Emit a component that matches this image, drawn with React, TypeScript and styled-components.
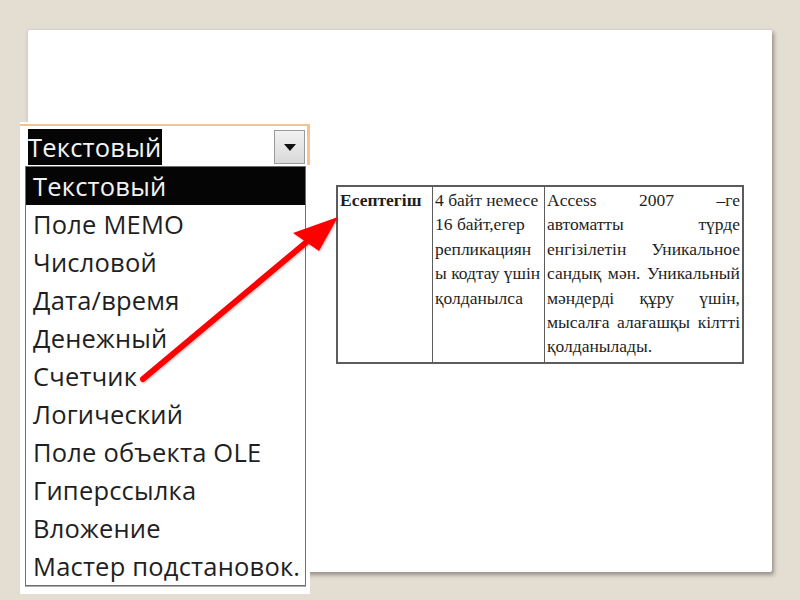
import React from "react"
import styled, { createGlobalStyle } from "styled-components"

const GlobalStyle = createGlobalStyle`
  html, body {
    margin: 0;
    padding: 0;
    background: #e4ddd2;
  }
`

const PageTag = styled.div`
  position: relative;
  width: 800px;
  height: 600px;
  padding: 29px 28px 0 27px;
  box-sizing: border-box;
  overflow: hidden;
`

const SlideTag = styled.div`
  height: 543px;
  background: #fff;
  border-radius: 2px;
  border-top: 1px solid #d6d1c8;
  border-left: 1px solid #d6d1c8;
  box-shadow: 2px 3px 4px rgba(0, 0, 0, 0.35);
  box-sizing: border-box;
  display: flex;
  align-items: flex-start;
  padding-top: 92px;
`

const DropdownTag = styled.div`
  width: 290px;
  margin-left: -8px;
  background: #fff;
  padding: 2px 0 8px;
  display: flex;
  flex-direction: column;
  font-family: "Open Sans", "Noto Sans", sans-serif;
  font-size: 25.5px;
  letter-spacing: 0.2px;
`

const ComboTag = styled.div`
  display: flex;
  align-items: center;
  justify-content: space-between;
  height: 41px;
  border-top: 2px solid #f3c48e;
  border-right: 3px solid #f3c48e;
  box-sizing: border-box;
  padding: 3px 2px 0 8px;
`

const ComboValue = styled.span`
  background: #050505;
  color: #f4f4f4;
  line-height: 36px;
  height: 36px;
  padding: 0 1px 0 0;
`

const ArrowButton = styled.div`
  width: 31px;
  height: 34px;
  box-sizing: border-box;
  border: 1px solid #9a9a9a;
  background: linear-gradient(#f2f2f2, #d9d9d9);
  display: flex;
  align-items: center;
  justify-content: center;
  &::after {
    content: "";
    border-left: 6px solid transparent;
    border-right: 6px solid transparent;
    border-top: 7px solid #111;
  }
`

const ListTag = styled.ul`
  list-style: none;
  margin: 1px 4px 0 5px;
  padding: 0;
  border: 1px solid #6f6f6f;
  box-shadow: 0 1px 0 #aaa;
`

const ItemTag = styled.li<{ $selected?: boolean }>`
  height: 38px;
  line-height: 38px;
  padding-left: 7px;
  white-space: nowrap;
  color: ${(p) => (p.$selected ? "#f2f2f2" : "#1f1f1f")};
  background: ${(p) => (p.$selected ? "#050505" : "transparent")};
`

const TableTag = styled.table`
  margin: 63px 0 0 26px;
  border-collapse: collapse;
  border: 2px solid #5c5c5c;
  font-family: "Liberation Serif", "Times New Roman", serif;
  font-size: 17.5px;
  line-height: 24.4px;
  color: #1e1e1e;
  td {
    border: 1.5px solid #5c5c5c;
    vertical-align: top;
    padding: 1px 2px 3px 2px;
  }
`

const KeyCell = styled.td`
  width: 90px;
  font-weight: bold;
`

const SizeCell = styled.td`
  width: 107px;
`

const DescCell = styled.td`
  width: 193px;
`

const LineTag = styled.span<{ $justify?: boolean }>`
  display: block;
  white-space: ${(p) => (p.$justify ? "normal" : "nowrap")};
  text-align: ${(p) => (p.$justify ? "justify" : "left")};
  text-align-last: ${(p) => (p.$justify ? "justify" : "left")};
`

const OverlayTag = styled.svg`
  position: absolute;
  left: 0;
  top: 0;
  pointer-events: none;
`

const items = [
  "Текстовый",
  "Поле МЕМО",
  "Числовой",
  "Дата/время",
  "Денежный",
  "Счетчик",
  "Логический",
  "Поле объекта OLE",
  "Гиперссылка",
  "Вложение",
  "Мастер подстановок.",
]

const sizeLines = ["4 байт немесе", "16 байт,егер", "репликациян", "ы кодтау үшін", "қолданылса"]

const descLines = [
  "Access 2007 –ге",
  "автоматты түрде",
  "енгізілетін Уникальное",
  "сандық мән. Уникальный",
  "мәндерді құру үшін,",
  "мысалға алағашқы кілтті",
]

const App = (): React.ReactElement => {
  return (
    <>
      <GlobalStyle />
      <PageTag>
        <SlideTag>
          <DropdownTag>
            <ComboTag>
              <ComboValue>Текстовый</ComboValue>
              <ArrowButton />
            </ComboTag>
            <ListTag>
              {items.map((item, i) => (
                <ItemTag key={item} $selected={i === 0}>
                  {item}
                </ItemTag>
              ))}
            </ListTag>
          </DropdownTag>
          <TableTag>
            <tbody>
              <tr>
                <KeyCell>Есептегіш</KeyCell>
                <SizeCell>
                  {sizeLines.map((l) => (
                    <LineTag key={l}>{l}</LineTag>
                  ))}
                </SizeCell>
                <DescCell>
                  {descLines.map((l) => (
                    <LineTag key={l} $justify>
                      {l}
                    </LineTag>
                  ))}
                  <LineTag>қолданылады.</LineTag>
                </DescCell>
              </tr>
            </tbody>
          </TableTag>
        </SlideTag>
        <OverlayTag width="800" height="600" viewBox="0 0 800 600">
          <defs>
            <filter id="arrowShadow" x="-10%" y="-10%" width="120%" height="120%">
              <feDropShadow dx="1" dy="1" stdDeviation="1" floodColor="#000" floodOpacity="0.25" />
            </filter>
          </defs>
          <g filter="url(#arrowShadow)">
            <line x1="143" y1="379" x2="309" y2="240" stroke="#ff0000" strokeWidth="6" strokeLinecap="round" />
            <polygon points="338,217 293,233 319,251" fill="#ff0000" />
          </g>
        </OverlayTag>
      </PageTag>
    </>
  )
}

export default App
